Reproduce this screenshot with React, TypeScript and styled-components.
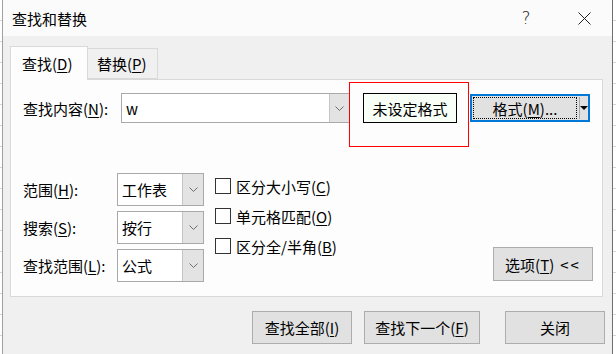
import { Fragment } from "react";
import styled, { createGlobalStyle } from "styled-components";

const GlobalStyle = createGlobalStyle`
  html, body { margin: 0; padding: 0; background: #fff; }
  body {
    font-family: "Noto Sans CJK SC", "Noto Sans", sans-serif;
    font-size: 15px;
    color: #000;
  }
`;

const Screen = styled.div`
  display: flex;
  width: 616px;
  height: 354px;
  overflow: hidden;
`;

// 대화상자 뒤의 시트 격자
const SheetStrip = styled.div<{ $w: number }>`
  flex: none;
  width: ${(p) => p.$w}px;
  background: repeating-linear-gradient(to bottom, #ffffff 0 20px, #d6d6d6 20px 21px);
`;

const Dialog = styled.div`
  flex: none;
  width: 609px;
  border-left: 1px solid #a0a0a0;
  border-right: 1px solid #6f6f6f;
  background: #f0f0f0;
  display: flex;
  flex-direction: column;
`;

const TitleBar = styled.div`
  height: 36px;
  flex: none;
  background: #fbfbfb;
  display: flex;
  align-items: center;
  padding-left: 9px;
`;

const TitleText = styled.span`
  font-size: 15px;
  line-height: 1;
  flex: 1;
`;

const TitleButton = styled.div`
  width: 46px;
  height: 36px;
  display: flex;
  align-items: center;
  justify-content: center;
  font-family: "DejaVu Sans", sans-serif;
  font-size: 17px;
  font-weight: 300;
  color: #222;
`;

const TitleButtons = styled.div`
  display: flex;
  gap: 12px;
  margin-right: 5px;
`;

const Body = styled.div`
  padding: 10px 0 0 7px;
`;

const TabRow = styled.div`
  display: flex;
  align-items: flex-end;
`;

const Tab = styled.div<{ $active?: boolean }>`
  box-sizing: border-box;
  display: flex;
  align-items: center;
  border: 1px solid #d9d9d9;
  ${(p) =>
    p.$active
      ? `
    width: 78px;
    height: 34px;
    margin-bottom: -1px;
    padding-left: 11px;
    border-bottom: none;
    background: #fcfdfc;
    position: relative;
    z-index: 1;
  `
      : `
    width: 70px;
    height: 31px;
    padding-left: 9px;
    border-left: none;
    background: #f0f0f0;
  `}
`;

const U = styled.span`
  text-decoration: underline;
  text-underline-offset: 2px;
`;

const Panel = styled.div`
  position: relative;
  box-sizing: border-box;
  width: 593px;
  border: 1px solid #d9d9d9;
  background: #fcfdfc;
  padding: 13px 9px 14px 12px;
`;

const FindRow = styled.div`
  display: flex;
  align-items: center;
  height: 30px;
`;

const FieldLabel = styled.span<{ $w: number }>`
  flex: none;
  width: ${(p) => p.$w}px;
  white-space: nowrap;
`;

const Combo = styled.div<{ $w: number; $h: number }>`
  box-sizing: border-box;
  flex: none;
  display: flex;
  width: ${(p) => p.$w}px;
  height: ${(p) => p.$h}px;
  border: 1px solid #a9a9a9;
  background: #fff;
`;

const ComboText = styled.span`
  flex: 1;
  display: flex;
  align-items: center;
  padding-left: 4px;
`;

const ComboButton = styled.div<{ $w: number }>`
  flex: none;
  width: ${(p) => p.$w}px;
  display: flex;
  align-items: center;
  justify-content: center;
  background: #e3e3e3;
  border-left: 1px solid #c4c4c4;
`;

const FormatPreview = styled.div`
  box-sizing: border-box;
  flex: none;
  margin-left: 13px;
  width: 94px;
  height: 30px;
  border: 1px solid #000;
  background: #f7fff7;
  display: flex;
  align-items: center;
  justify-content: center;
`;

const FormatButton = styled.div`
  box-sizing: border-box;
  flex: none;
  margin-left: 13px;
  width: 120px;
  height: 28px;
  border: 2px solid #0078d7;
  background: #e1e1e1;
  display: flex;
  align-items: stretch;
  padding: 1px 0;
`;

const FocusRing = styled.div`
  margin-left: 1px;
  width: 104px;
  border: 1px dotted #000;
  display: flex;
  align-items: center;
  justify-content: center;
`;

const SplitLine = styled.div`
  width: 1px;
  margin-left: 2px;
  background: #a8a8a8;
`;

const SplitArrow = styled.div`
  flex: 1;
  display: flex;
  align-items: center;
  justify-content: center;
`;

const Marker = styled.div`
  position: absolute;
  left: 338px;
  top: 2px;
  width: 120px;
  height: 65px;
  box-sizing: border-box;
  border: 1px solid #ff0000;
`;

const OptionsArea = styled.div`
  display: flex;
  margin-top: 50px;
`;

const SelectGrid = styled.div`
  display: grid;
  grid-template-columns: 94px 87px;
  grid-auto-rows: 33px;
  row-gap: 5px;
  align-items: center;
`;

const CheckList = styled.div`
  display: flex;
  flex-direction: column;
  gap: 4px;
  margin-left: 11px;
`;

const CheckRow = styled.label`
  height: 26px;
  display: flex;
  align-items: center;
  white-space: nowrap;
`;

const CheckBox = styled.span`
  box-sizing: border-box;
  width: 16px;
  height: 16px;
  border: 1px solid #333;
  background: #fff;
  margin-right: 5px;
`;

const PushButton = styled.div<{ $w: number; $h?: number }>`
  box-sizing: border-box;
  flex: none;
  width: ${(p) => p.$w}px;
  height: ${(p) => p.$h ?? 33}px;
  border: 1px solid #adadad;
  background: #e1e1e1;
  display: flex;
  align-items: center;
  justify-content: center;
  white-space: nowrap;
`;

const OptionsButton = styled(PushButton)`
  margin-left: auto;
  align-self: flex-end;
  margin-bottom: 1px;
`;

const Arrows = styled.span`
  margin-left: 6px;
  letter-spacing: 2px;
`;

const ButtonBar = styled.div`
  display: flex;
  justify-content: flex-end;
  gap: 12px;
  margin-top: 14px;
  padding-right: 7px;
`;

const CloseButton = styled(PushButton)`
  margin-left: 13px;
`;

const Chevron = () => (
  <svg width="9" height="5" viewBox="0 0 9 5">
    <polyline points="0.5,0.5 4.5,4.5 8.5,0.5" fill="none" stroke="#6d6d6d" strokeWidth="1" />
  </svg>
);

const selects = [
  { label: "范围", key: "H", value: "工作表" },
  { label: "搜索", key: "S", value: "按行" },
  { label: "查找范围", key: "L", value: "公式" },
];

const checks = [
  { label: "区分大小写", key: "C" },
  { label: "单元格匹配", key: "O" },
  { label: "区分全/半角", key: "B" },
];

function App() {
  return (
    <>
      <GlobalStyle />
      <Screen>
        <SheetStrip $w={2} />
        <Dialog>
          <TitleBar>
            <TitleText>查找和替换</TitleText>
            <TitleButtons>
              <TitleButton>?</TitleButton>
              <TitleButton>
                <svg width="13" height="13" viewBox="0 0 13 13">
                  <path d="M0.5 0.5 L12.5 12.5 M12.5 0.5 L0.5 12.5" stroke="#222" strokeWidth="1" />
                </svg>
              </TitleButton>
            </TitleButtons>
          </TitleBar>

          <Body>
            <TabRow>
              <Tab $active>
                查找(<U>D</U>)
              </Tab>
              <Tab>
                替换(<U>P</U>)
              </Tab>
            </TabRow>

            <Panel>
              <FindRow>
                <FieldLabel $w={98}>
                  查找内容(<U>N</U>):
                </FieldLabel>
                <Combo $w={229} $h={30}>
                  <ComboText>w</ComboText>
                  <ComboButton $w={19}>
                    <Chevron />
                  </ComboButton>
                </Combo>
                <FormatPreview>未设定格式</FormatPreview>
                <FormatButton>
                  <FocusRing>
                    格式(<U>M</U>)...
                  </FocusRing>
                  <SplitLine />
                  <SplitArrow>
                    <svg width="8" height="4" viewBox="0 0 8 4">
                      <polygon points="0,0 8,0 4,4" fill="#000" />
                    </svg>
                  </SplitArrow>
                </FormatButton>
              </FindRow>

              <OptionsArea>
                <SelectGrid>
                  {selects.map((s) => (
                    <Fragment key={s.key}>
                      <FieldLabel $w={94}>
                        {s.label}(<U>{s.key}</U>):
                      </FieldLabel>
                      <Combo $w={87} $h={33}>
                        <ComboText>{s.value}</ComboText>
                        <ComboButton $w={20}>
                          <Chevron />
                        </ComboButton>
                      </Combo>
                    </Fragment>
                  ))}
                </SelectGrid>

                <CheckList>
                  {checks.map((c) => (
                    <CheckRow key={c.key}>
                      <CheckBox />
                      {c.label}(<U>{c.key}</U>)
                    </CheckRow>
                  ))}
                </CheckList>

                <OptionsButton $w={100} $h={34}>
                  选项(<U>T</U>)<Arrows>&lt;&lt;</Arrows>
                </OptionsButton>
              </OptionsArea>

              <Marker />
            </Panel>

            <ButtonBar>
              <PushButton $w={100}>
                查找全部(<U>I</U>)
              </PushButton>
              <PushButton $w={116}>
                查找下一个(<U>F</U>)
              </PushButton>
              <CloseButton $w={100}>关闭</CloseButton>
            </ButtonBar>
          </Body>
        </Dialog>
        <SheetStrip $w={3} />
      </Screen>
    </>
  );
}

export default App;
